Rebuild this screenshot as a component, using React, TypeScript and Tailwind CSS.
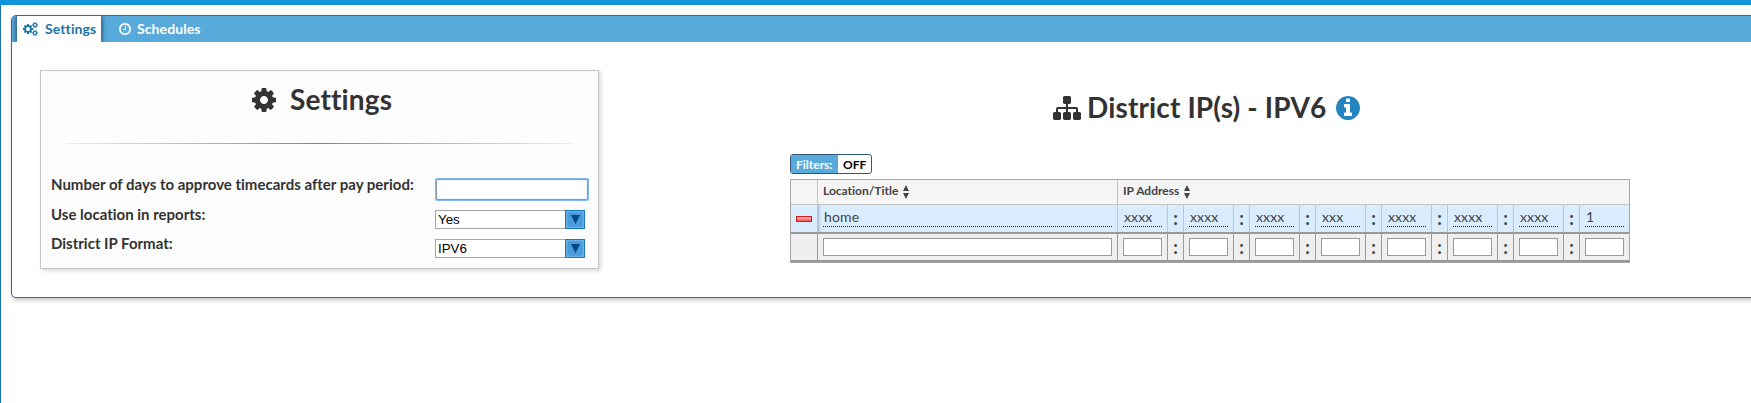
import React from "react";

const COG = "M1152 896q0-106-75-181t-181-75-181 75-75 181 75 181 181 75 181-75 75-181zm512-109v222q0 12-8 23t-20 13l-185 28q-19 54-39 91 35 50 107 138 10 12 10 25t-9 23q-27 37-99 108t-94 71q-12 0-26-9l-138-108q-44 23-91 38-16 136-29 186-7 28-36 28h-222q-14 0-24.5-8.5t-11.5-21.5l-28-184q-49-16-90-37l-141 107q-10 9-25 9-14 0-25-11-126-114-165-168-7-10-7-23 0-12 8-23 15-21 51-66.5t54-70.5q-27-50-41-99l-183-27q-13-2-21-12.5t-8-23.5v-222q0-12 8-23t19-13l186-28q14-46 39-92-40-57-107-138-10-12-10-24 0-10 9-23 26-36 98.5-107.5t94.5-71.5q13 0 26 10l138 107q44-23 91-38 16-136 29-186 7-28 36-28h222q14 0 24.5 8.5t11.5 21.5l28 184q49 16 90 37l142-107q9-9 24-9 13 0 25 10 129 119 165 170 7 8 7 22 0 12-8 23-15 21-51 66.5t-54 70.5q26 50 41 98l183 28q13 2 21 12.5t8 23.5z";
const CLOCK = "M1024 544v448q0 14-9 23t-23 9h-320q-14 0-23-9t-9-23v-64q0-14 9-23t23-9h224v-352q0-14 9-23t23-9h64q14 0 23 9t9 23zm416 352q0-148-73-273t-198-198-273-73-273 73-198 198-73 273 73 273 198 198 273 73 273-73 198-198 73-273zm224 0q0 209-103 385.5t-279.5 279.5-385.5 103-385.5-103-279.5-279.5-103-385.5 103-385.5 279.5-279.5 385.5-103 385.5 103 279.5 279.5 103 385.5z";
const INFO = "M1152 1376v-160q0-14-9-23t-23-9h-96v-512q0-14-9-23t-23-9h-320q-14 0-23 9t-9 23v160q0 14 9 23t23 9h96v320h-96q-14 0-23 9t-9 23v160q0 14 9 23t23 9h448q14 0 23-9t9-23zm-128-896v-160q0-14-9-23t-23-9h-192q-14 0-23 9t-9 23v160q0 14 9 23t23 9h192q14 0 23-9t9-23zm640 416q0 209-103 385.5t-279.5 279.5-385.5 103-385.5-103-279.5-279.5-103-385.5 103-385.5 279.5-279.5 385.5-103 385.5 103 279.5 279.5 103 385.5z";
const SITEMAP = "M1792 1248v320q0 40-28 68t-68 28h-320q-40 0-68-28t-28-68v-320q0-40 28-68t68-28h96v-192h-512v192h96q40 0 68 28t28 68v320q0 40-28 68t-68 28h-320q-40 0-68-28t-28-68v-320q0-40 28-68t68-28h96v-192h-512v192h96q40 0 68 28t28 68v320q0 40-28 68t-68 28h-320q-40 0-68-28t-28-68v-320q0-40 28-68t68-28h96v-192q0-52 38-90t90-38h512v-192h-96q-40 0-68-28t-28-68v-320q0-40 28-68t68-28h320q40 0 68 28t28 68v320q0 40-28 68t-68 28h-96v192h512q52 0 90 38t38 90v192h96q40 0 68 28t28 68z";
const COGS = "M832 896q0-106-75-181t-181-75-181 75-75 181 75 181 181 75 181-75 75-181zm768 512q0-52-38-90t-90-38-90 38-38 90q0 53 37.5 90.5t90.5 37.5 90.5-37.5 37.5-90.5zm0-1024q0-52-38-90t-90-38-90 38-38 90q0 53 37.5 90.5t90.5 37.5 90.5-37.5 37.5-90.5zm-384 421v185q0 10-7 19.5t-16 10.5l-155 24q-11 35-32 76 34 48 90 115 7 11 7 20 0 12-7 19-23 30-82.5 89.5t-78.5 59.5q-11 0-21-7l-115-90q-37 19-77 31-11 108-23 155-7 24-30 24h-186q-11 0-20-7.5t-10-17.5l-23-153q-34-10-75-31l-118 89q-7 7-20 7-11 0-21-8-144-133-144-160 0-9 7-19 10-14 41-53t47-61q-23-44-35-82l-152-24q-10-1-17-9.5t-7-19.5v-185q0-10 7-19.5t16-10.5l155-24q11-35 32-76-34-48-90-115-7-11-7-20 0-12 7-20 22-30 82-89t79-59q11 0 21 7l115 90q34-18 77-32 11-108 23-154 7-24 30-24h186q11 0 20 7.5t10 17.5l23 153q34 10 75 31l118-89q8-7 20-7 11 0 21 8 144 133 144 160 0 8-7 19-12 16-42 54t-45 60q23 48 34 82l152 23q10 2 17 10.5t7 19.5zm640 533v140q0 16-149 31-12 27-30 52 51 113 51 138 0 4-4 7-122 71-124 71-8 0-46-47t-52-68q-20 2-30 2t-30-2q-14 21-52 68t-46 47q-2 0-124-71-4-3-4-7 0-25 51-138-18-25-30-52-149-15-149-31v-140q0-16 149-31 13-29 30-52-51-113-51-138 0-4 4-7 4-2 35-20t59-34 30-16q8 0 46 46.5t52 67.5q20-2 30-2t30 2q51-71 92-112l6-2q4 0 124 70 4 3 4 7 0 25-51 138 17 23 30 52 149 15 149 31zm0-1024v140q0 16-149 31-12 27-30 52 51 113 51 138 0 4-4 7-122 71-124 71-8 0-46-47t-52-68q-20 2-30 2t-30-2q-14 21-52 68t-46 47q-2 0-124-71-4-3-4-7 0-25 51-138-18-25-30-52-149-15-149-31v-140q0-16 149-31 13-29 30-52-51-113-51-138 0-4 4-7 4-2 35-20t59-34 30-16q8 0 46 46.5t52 67.5q20-2 30-2t30 2q51-71 92-112l6-2q4 0 124 70 4 3 4 7 0 25-51 138 17 23 30 52 149 15 149 31z";

function Icon({ d, box = "128 128 1536 1536", className }: { d: string; box?: string; className: string }) {
  return (
    <svg viewBox={box} fill="currentColor" className={"shrink-0 " + className} aria-hidden="true">
      <path d={d} />
    </svg>
  );
}

function SortArrows() {
  return (
    <svg viewBox="0 0 6 14" className="ml-[5px] h-[14px] w-[6px] shrink-0" fill="#444">
      <path d="M3 0L6 6H0zM3 14L0 8H6z" />
    </svg>
  );
}

function SelectBox({ value }: { value: string }) {
  return (
    <div className="flex h-[19px] w-[150px] bg-white">
      <div className="flex flex-1 items-center border border-r-0 border-[#a5a5a5] pl-[2px] font-['Liberation_Sans',sans-serif] text-[13.33px] leading-none text-black">
        {value}
      </div>
      <div className="flex w-5 items-center justify-center border border-[#1a78b8] bg-[#459bdb] shadow-[inset_0_0_2px_1px_#74b8ea]">
        <svg viewBox="0 0 9 9" className="h-[9px] w-[9px]" fill="#04467e">
          <path d="M0 0H9L4.5 9z" />
        </svg>
      </div>
    </div>
  );
}

function SettingRow({ label, children }: { label: string; children: React.ReactNode }) {
  return (
    <div className="flex w-[537px] justify-between">
      <span className="-mt-[2px] text-[15px] leading-[18px] font-bold">{label}</span>
      <div className="w-[153px]">{children}</div>
    </div>
  );
}

const octets = ["xxxx", "xxxx", "xxxx", "xxx", "xxxx", "xxxx", "xxxx", "1"];

function AddressRow({ title, values, first }: { title?: string; values: string[]; first: React.ReactNode }) {
  const filled = title !== undefined;
  const line = filled ? "border-[#c4c4c4]" : "border-[#999]";
  const field = filled
    ? "mt-[3px] h-[19px] border-b border-dotted border-[#0000e0] text-[14px] leading-[17px] tracking-[0.15px]"
    : "mt-[4px] h-[18px] border border-[#999] bg-white";
  return (
    <div className={"flex " + (filled ? "h-[27px] bg-[#d9edff]" : "h-[26px] bg-[#efefef]")}>
      <div className={"flex w-[27px] shrink-0 items-center justify-center border-r " + line}>{first}</div>
      <div className={"w-[300px] shrink-0 border-r px-[5px] " + line + (filled ? " shadow-[inset_3px_0_3px_-2px_#9bb0c0]" : "")}>
        <div className={"pl-px " + field}>{title}</div>
      </div>
      {values.map((v, i) => (
        <React.Fragment key={i}>
          <div className={"shrink-0 px-[5px] " + line + (i < 7 ? " w-[50px] border-r" : " w-[49px]")}>
            <div className={"w-[39px] pl-px " + field}>{v}</div>
          </div>
          {i < 7 && (
            <div className={"w-4 shrink-0 border-r text-center text-[18px] leading-[27px] font-bold " + line}>:</div>
          )}
        </React.Fragment>
      ))}
    </div>
  );
}

export default function App() {
  return (
    <div className="flex h-[403px] w-[1751px] flex-col overflow-hidden border-t-[5px] border-[#1094d9] bg-white font-['Lato',sans-serif] text-[#333] [font-variant-ligatures:none]">
      <div className="flex-1 border-l border-[#1b75a5] pt-[10px] pl-[10px]">
        <div className="h-[283px] w-[1760px] overflow-hidden rounded-[5px] border border-[#1b75a5] bg-white shadow-[1px_2px_4px_rgba(0,0,0,0.25)]">
          <div className="flex h-[26px] overflow-hidden bg-[#57aad9] pl-[5px] text-[14px] font-bold">
            <div className="flex w-[84px] items-center bg-white pl-[6px] text-[#1b75a5] shadow-[0_0_5px_1px_#1f4f70]">
              <Icon d={COGS} box="-64 0 1920 1792" className="h-[14px] w-[15px]" />
              <span className="-mt-[2px] ml-[7px] tracking-[0.1px]">Settings</span>
            </div>
            <div className="flex items-center pl-[18px] text-white">
              <Icon d={CLOCK} className="h-3 w-3" />
              <span className="-mt-[2px] ml-[6px] tracking-[0.1px]">Schedules</span>
            </div>
          </div>

          <div className="flex">
            <section className="mt-[28px] ml-[28px] h-[199px] w-[559px] border border-[#c6c6c6] bg-[#fdfdfd] shadow-[2px_2px_4px_rgba(0,0,0,0.15)]">
              <h1 className="flex h-[58px] items-center pl-[211px] text-[28px] font-bold tracking-[0.14px]">
                <Icon d={COG} className="h-6 w-6" />
                <span className="-mt-[2px] ml-[14px]">Settings</span>
              </h1>
              <div className="mt-[14px] ml-[25px] h-px w-[507px] bg-linear-to-r from-[#e6f0f6] via-[#3a98cf] to-[#e6f0f6]" />
              <div className="flex flex-col pl-[10px]">
                <div className="mt-[33px] h-[30px]">
                  <SettingRow label="Number of days to approve timecards after pay period:">
                    <div className="mt-[2px] ml-px h-[21px] w-[152px] rounded-[1px] border border-[#8a9aaa] bg-white shadow-[0_0_0_1px_#83bcf5,inset_0_0_1px_#83bcf5]" />
                  </SettingRow>
                </div>
                <div className="h-[29px]">
                  <SettingRow label="Use location in reports:">
                    <div className="pt-[3px]"><SelectBox value="Yes" /></div>
                  </SettingRow>
                </div>
                <SettingRow label="District IP Format:">
                  <div className="pt-[3px]"><SelectBox value="IPV6" /></div>
                </SettingRow>
              </div>
            </section>

            <section className="mt-[46px] ml-[191px] w-[840px]">
              <h1 className="flex h-[40px] items-center pl-[263px] text-[28px] font-bold tracking-[0.14px] whitespace-nowrap">
                <Icon d={SITEMAP} box="0 128 1792 1536" className="h-6 w-7" />
                <span className="-mt-[2px] ml-[6px]">District IP(s) - IPV6</span>
                <Icon d={INFO} className="ml-[10px] h-6 w-6 text-[#2484bf]" />
              </h1>
              <div className="mt-[26px] flex h-5 w-[82px] overflow-hidden rounded-[3px] border border-[#33557d] text-[12px] leading-[19px] font-bold">
                <span className="w-[47px] bg-[#57aad9] pl-[5px] text-white">Filters:</span>
                <span className="pl-[5px] text-black">OFF</span>
              </div>
              <div className="mt-[5px] h-[84px] w-[840px] border border-[#a5a5a5] text-[#444]">
                <div className="flex h-[25px] border-b border-[#c4c4c4] bg-[#f5f5f5] text-[12px] font-bold">
                  <div className="w-[27px] border-r border-[#c4c4c4]" />
                  <div className="flex w-[300px] items-center border-r border-[#c4c4c4] pl-[5px]">
                    <span className="-mt-[2px]">Location/Title</span>
                    <SortArrows />
                  </div>
                  <div className="flex items-center pl-[5px]">
                    <span className="-mt-[2px]">IP Address</span>
                    <SortArrows />
                  </div>
                </div>
                <AddressRow
                  title="home"
                  values={octets}
                  first={<span className="h-[6px] w-4 border border-[#d8141c] bg-linear-to-b from-[#f9b5b5] to-[#ee5555]" />}
                />
                <div className="h-[2px] bg-[#999]" />
                <AddressRow values={octets.map(() => "")} first={null} />
                <div className="h-[2px] bg-[#999]" />
              </div>
            </section>
          </div>
        </div>
      </div>
    </div>
  );
}
